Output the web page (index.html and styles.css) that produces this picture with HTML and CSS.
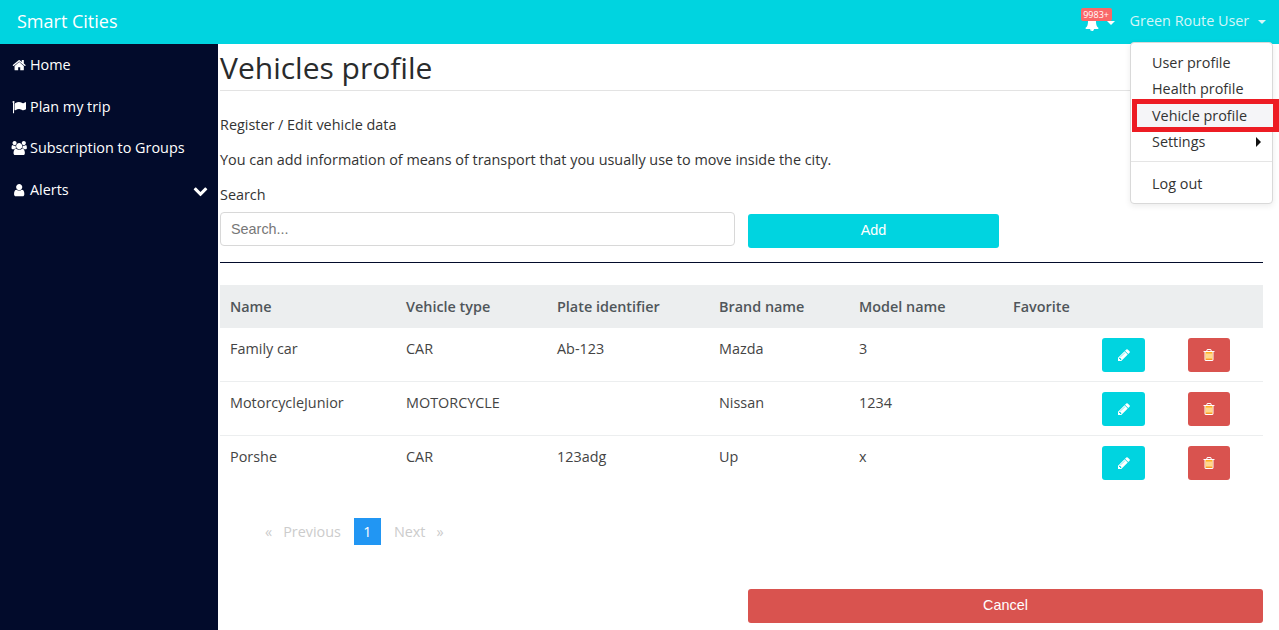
FILE: index.html
```html
<!DOCTYPE html>
<html lang="en">
<head>
<meta charset="utf-8">
<title>Vehicles profile</title>
<link rel="stylesheet" href="styles.css">
</head>
<body>
<svg class="sprite" xmlns="http://www.w3.org/2000/svg">
  <symbol id="i-home" viewBox="0 0 1792 1792"><path d="M1472 992v480q0 26-19 45t-45 19h-384v-384h-256v384h-384q-26 0-45-19t-19-45v-480q0-1 .5-3t.5-3l575-474 575 474q1 2 1 6zm223-69l-62 74q-8 9-21 11h-3q-13 0-21-7l-692-577-692 577q-12 8-24 7-13-2-21-11l-62-74q-8-10-7-23.5t11-20.5l719-599q32-26 76-26t76 26l244 204v-195q0-14 9-23t23-9h192q14 0 23 9t9 23v408l219 182q10 8 11 21.5t-7 23.5z"/></symbol>
  <symbol id="i-flag" viewBox="0 0 1792 1792"><path d="M320 256q0 72-64 110v1266q0 13-9.500 22.500t-22.500 9.500h-64q-13 0-22.500-9.500t-9.500-22.500v-1266q-64-38-64-110 0-53 37.500-90.500t90.500-37.500 90.500 37.500 37.500 90.500zm1472 64v763q0 25-12.500 38.500t-39.500 27.500q-215 116-369 116-61 0-123.500-22t-108.500-48-115.500-48-142.500-22q-192 0-464 146-17 9-33 9-26 0-45-19t-19-45v-742q0-32 31-55 21-14 79-43 236-120 421-120 107 0 200 29t219 88q38 19 88 19 54 0 117.500-21t110-47 88-47 54.500-21q26 0 45 19t19 45z"/></symbol>
  <symbol id="i-users" viewBox="0 0 1920 1792"><path d="M593 896q-162 5-265 128h-134q-82 0-138-40.500t-56-118.500q0-353 124-353 6 0 43.500 21t97.500 42.500 119 21.500q67 0 133-23-5 37-5 66 0 139 81 256zm1071 637q0 120-73 189.500t-194 69.500h-874q-121 0-194-69.500t-73-189.500q0-53 3.500-103.500t14-109 26.500-108.500 43-97.500 62-81 85.500-53.500 111.500-20q10 0 43 21.500t73 48 107 48 135 21.500 135-21.500 107-48 73-48 43-21.500q61 0 111.500 20t85.500 53.500 62 81 43 97.500 26.500 108.500 14 109 3.500 103.500zm-1024-1277q0 106-75 181t-181 75-181-75-75-181 75-181 181-75 181 75 75 181zm704 384q0 159-112.500 271.500t-271.500 112.500-271.500-112.500-112.500-271.500 112.500-271.500 271.500-112.500 271.500 112.500 112.500 271.500zm576 225q0 78-56 118.500t-138 40.500h-134q-103-123-265-128 81-117 81-256 0-29-5-66 66 23 133 23 59 0 119-21.500t97.500-42.500 43.500-21q124 0 124 353zm-128-609q0 106-75 181t-181 75-181-75-75-181 75-181 181-75 181 75 75 181z"/></symbol>
  <symbol id="i-user" viewBox="0 0 1792 1792"><path d="M1536 1399q0 109-62.500 187t-150.500 78h-854q-88 0-150.500-78t-62.500-187q0-85 8.500-160.500t31.500-152 58.500-131 94-89 134.500-34.500q131 128 313 128t313-128q76 0 134.500 34.500t94 89 58.500 131 31.500 152 8.500 160.500zm-256-887q0 159-112.500 271.500t-271.500 112.500-271.500-112.500-112.500-271.500 112.500-271.500 271.500-112.500 271.500 112.500 112.500 271.500z"/></symbol>
  <symbol id="i-chevron" viewBox="0 0 1792 1792"><path d="M1683 808l-742 741q-19 19-45 19t-45-19l-742-741q-19-19-19-45.500t19-45.500l166-165q19-19 45-19t45 19l531 531 531-531q19-19 45-19t45 19l166 165q19 19 19 45.500t-19 45.500z"/></symbol>
  <symbol id="i-bell" viewBox="0 0 1792 1792"><path d="M912 1696q0-16-16-16-59 0-101.500-42.500t-42.500-101.500q0-16-16-16t-16 16q0 73 51.500 124.500t124.500 51.500q16 0 16-16zm816-288q0 52-38 90t-90 38h-448q0 106-75 181t-181 75-181-75-75-181h-448q-52 0-90-38t-38-90q50-42 91-88t85-119.500 74.500-158.500 50-206 19.500-260q0-152 117-282.500t307-158.500q-8-19-8-39 0-40 28-68t68-28 68 28 28 68q0 20-8 39 190 28 307 158.500t117 282.500q0 139 19.500 260t50 206 74.500 158.500 85 119.500 91 88z"/></symbol>
  <symbol id="i-pencil" viewBox="0 0 1792 1792"><path d="M491 1536l91-91-235-235-91 91v107h128v128h107zm523-928q0-22-22-22-10 0-17 7l-542 542q-7 7-7 17 0 22 22 22 10 0 17-7l542-542q7-7 7-17zm-54-192l416 416-832 832h-416v-416zm683 96q0 53-37 90l-166 166-416-416 166-165q36-38 90-38 53 0 91 38l235 234q37 39 37 91z"/></symbol>
  <symbol id="i-trash" viewBox="0 0 1792 1792"><rect x="400" y="500" width="990" height="1000" fill="#ffb020"/><path d="M704 736v576q0 14-9 23t-23 9h-64q-14 0-23-9t-9-23v-576q0-14 9-23t23-9h64q14 0 23 9t9 23zm256 0v576q0 14-9 23t-23 9h-64q-14 0-23-9t-9-23v-576q0-14 9-23t23-9h64q14 0 23 9t9 23zm256 0v576q0 14-9 23t-23 9h-64q-14 0-23-9t-9-23v-576q0-14 9-23t23-9h64q14 0 23 9t9 23zm128 724v-948h-896v948q0 22 7 40.500t14.500 27 10.500 8.500h832q3 0 10.500-8.500t14.500-27 7-40.500zm-672-1076h448l-48-117q-7-9-17-11h-317q-10 2-17 11zm928 32v64q0 14-9 23t-23 9h-96v948q0 83-47 143.500t-113 60.500h-832q-66 0-113-58.500t-47-141.500v-952h-96q-14 0-23-9t-9-23v-64q0-14 9-23t23-9h309l70-167q15-37 54-63t79-26h320q40 0 79 26t54 63l70 167h309q14 0 23 9t9 23z"/></symbol>
</svg>

<header class="navbar">
  <a class="brand">Smart Cities</a>
  <div class="nav-right">
    <a class="nav-bell">
      <svg class="bell-icon"><use href="#i-bell"/></svg>
      <span class="badge">9983+</span>
      <span class="caret"></span>
    </a>
    <a class="nav-user">Green Route User <span class="caret"></span></a>
  </div>
</header>

<div class="shell">
  <nav class="sidebar">
    <a class="side-item"><svg class="side-icon"><use href="#i-home"/></svg>Home</a>
    <a class="side-item"><svg class="side-icon"><use href="#i-flag"/></svg>Plan my trip</a>
    <a class="side-item"><svg class="side-icon side-icon-wide"><use href="#i-users"/></svg>Subscription to Groups</a>
    <a class="side-item"><svg class="side-icon"><use href="#i-user"/></svg>Alerts<svg class="side-chevron"><use href="#i-chevron"/></svg></a>
  </nav>

  <main class="content">
    <h1 class="page-title">Vehicles profile</h1>
    <p class="lead">Register / Edit vehicle data</p>
    <p class="lead-2">You can add information of means of transport that you usually use to move inside the city.</p>
    <label class="search-label" for="search">Search</label>
    <div class="search-row">
      <input id="search" class="search-input" type="text" placeholder="Search...">
      <button class="btn btn-add">Add</button>
    </div>
    <hr class="rule">

    <table class="data">
      <colgroup>
        <col class="c1"><col class="c2"><col class="c3"><col class="c4"><col class="c5"><col class="c6"><col class="c7"><col class="c8">
      </colgroup>
      <thead>
        <tr><th>Name</th><th>Vehicle type</th><th>Plate identifier</th><th>Brand name</th><th>Model name</th><th>Favorite</th><th></th><th></th></tr>
      </thead>
      <tbody>
        <tr>
          <td>Family car</td><td>CAR</td><td>Ab-123</td><td>Mazda</td><td>3</td><td></td>
          <td><button class="icon-btn edit"><svg><use href="#i-pencil"/></svg></button></td>
          <td><button class="icon-btn del"><svg><use href="#i-trash"/></svg></button></td>
        </tr>
        <tr>
          <td>MotorcycleJunior</td><td>MOTORCYCLE</td><td></td><td>Nissan</td><td>1234</td><td></td>
          <td><button class="icon-btn edit"><svg><use href="#i-pencil"/></svg></button></td>
          <td><button class="icon-btn del"><svg><use href="#i-trash"/></svg></button></td>
        </tr>
        <tr>
          <td>Porshe</td><td>CAR</td><td>123adg</td><td>Up</td><td>x</td><td></td>
          <td><button class="icon-btn edit"><svg><use href="#i-pencil"/></svg></button></td>
          <td><button class="icon-btn del"><svg><use href="#i-trash"/></svg></button></td>
        </tr>
      </tbody>
    </table>

    <div class="pager">
      <span class="pg-off pg-arrow">«</span>
      <span class="pg-off">Previous</span>
      <span class="pg-on">1</span>
      <span class="pg-off">Next</span>
      <span class="pg-off pg-arrow">»</span>
    </div>

    <div class="actions">
      <button class="btn btn-cancel">Cancel</button>
    </div>
  </main>
</div>

<div class="menu">
  <a class="menu-item">User profile</a>
  <a class="menu-item">Health profile</a>
  <a class="menu-item menu-active">Vehicle profile</a>
  <a class="menu-item menu-sub">Settings</a>
  <div class="menu-div"></div>
  <a class="menu-item">Log out</a>
</div>
```

FILE: styles.css
```css
* { box-sizing: border-box; }
html, body { height: 100%; }
body {
  margin: 0;
  height: 630px;
  overflow: hidden;
  font-family: "Open Sans", sans-serif;
  font-size: 14.4px;
  line-height: 20px;
  color: #333;
  background: #fff;
}
.sprite { display: none; }

.navbar {
  height: 44px;
  background: #00d4e0;
  display: flex;
  align-items: center;
  justify-content: space-between;
  padding: 0 13px 2px 17px;
}
.brand { font-size: 18px; color: #fff; }
.nav-right { display: flex; align-items: center; gap: 15px; }
.nav-bell { position: relative; display: flex; align-items: center; width: 32px; height: 20px; }
.bell-icon { width: 14px; height: 14px; fill: #fff; margin: 5px 0 0 2px; }
.badge {
  position: absolute;
  left: -2px;
  top: -3px;
  width: 31px;
  height: 13px;
  background: #f96868;
  border-radius: 2px;
  color: #fff;
  font-size: 9px;
  line-height: 13px;
  text-align: center;
}
.caret {
  display: inline-block;
  width: 0;
  height: 0;
  border-top: 4px solid #fff;
  border-left: 4px solid transparent;
  border-right: 4px solid transparent;
  vertical-align: middle;
}
.nav-bell .caret { margin: 3px 0 0 8px; }
.nav-user { color: #d5f6f8; }
.nav-user .caret { border-top-color: #d5f6f8; margin-left: 5px; }

.shell { display: flex; height: 586px; }
.sidebar {
  width: 218px;
  flex: none;
  background: #020b2b;
  padding-top: 0.5px;
}
.side-item {
  position: relative;
  display: flex;
  align-items: center;
  height: 41.5px;
  padding-left: 12px;
  color: #fff;
}
.side-icon { width: 14.4px; height: 14.4px; fill: #fff; margin-right: 3.6px; flex: none; }
.side-icon-wide { width: 16.4px; margin-left: -1px; margin-right: 2.6px; }
.side-chevron { position: absolute; right: 10px; top: 14px; width: 15px; height: 15px; fill: #fff; }

.content { flex: 1; min-width: 0; padding: 0 16px 0 2px; }
.page-title {
  margin: 0;
  height: 47px;
  font-size: 30px;
  font-weight: 400;
  line-height: 48px;
  color: #292b2c;
  border-bottom: 1px solid #e3e3e3;
}
.lead { margin: 24px 0 0; }
.lead-2 { margin: 15px 0 0; }
.search-label { display: block; margin-top: 15px; }
.search-row { display: flex; align-items: flex-start; gap: 13px; margin-top: 7px; }
.search-input {
  width: 515px;
  height: 34px;
  border: 1px solid #d8d8d8;
  border-radius: 4px;
  padding: 0 10px;
  font-family: "Liberation Sans", sans-serif;
  font-size: 14.4px;
  color: #555;
}
.search-input::placeholder { color: #777; opacity: 1; }
.btn {
  height: 34px;
  padding: 0 0 2px;
  border: 0;
  border-radius: 3px;
  color: #fff;
  font-family: "Liberation Sans", sans-serif;
  font-size: 14.4px;
}
.btn-add { width: 251px; margin-top: 2px; background: #00d4e0; }
.rule { height: 1px; margin: 14px 0 0; border: 0; background: #020b2b; }

.data { width: 100%; margin-top: 22px; border-collapse: separate; border-spacing: 0; table-layout: fixed; }
.c1 { width: 176px; } .c2 { width: 151px; } .c3 { width: 162px; } .c4 { width: 140px; }
.c5 { width: 154px; } .c6 { width: 89px; } .c7 { width: 86px; } .c8 { width: 85px; }
.data th {
  height: 43px;
  padding: 1px 10px 0;
  background: #eceeef;
  font-weight: 600;
  text-align: left;
  color: #50565a;
}
.data td {
  height: 54px;
  padding: 11px 10px 0;
  vertical-align: top;
  border-bottom: 1px solid #eceeef;
  color: #444;
}
.data td:nth-child(n+7) { padding-top: 10px; }
.data tbody tr:last-child td { border-bottom: 0; }
.icon-btn {
  display: flex;
  align-items: center;
  justify-content: center;
  height: 34px;
  padding: 0;
  border: 0;
  border-radius: 3px;
}
.icon-btn svg { width: 14px; height: 14px; fill: #fff; }
.edit { width: 43px; background: #00d4e0; }
.del { width: 42px; background: #d9534f; }

.pager { display: flex; align-items: center; height: 27px; margin: 28px 0 0 45px; color: #ccc; }
.pg-off { color: #ccc; margin-right: 13px; }
.pg-arrow { margin-right: 11px; }
.pg-on + .pg-off { margin-right: 11px; }
.pg-on {
  width: 27px;
  height: 27px;
  margin-right: 13px;
  background: #2196f3;
  color: #fff;
  text-align: center;
  line-height: 28px;
}

.actions { display: flex; justify-content: flex-end; margin-top: 44px; }
.btn-cancel { width: 515px; background: #d9534f; }

.menu {
  position: absolute;
  left: 1130px;
  top: 42px;
  width: 143px;
  height: 162px;
  padding-top: 7px;
  background: #fff;
  border: 1px solid #d9d9d9;
  border-radius: 4px;
  box-shadow: 0 2px 6px rgba(0,0,0,.08);
}
.menu-item {
  position: relative;
  display: block;
  height: 26px;
  padding-left: 21px;
  line-height: 26px;
  color: #333;
  white-space: nowrap;
}
.menu-active {
  width: 147px;
  height: 33px;
  margin: -3px 0 -3px 1px;
  padding-left: 15px;
  line-height: 24px;
  background: #f5f5f8;
  border: 5px solid #ed1c24;
  border-right-width: 6px;
}
.menu-sub::after {
  content: "";
  position: absolute;
  right: 11px;
  top: 8px;
  border-left: 5px solid #111;
  border-top: 5px solid transparent;
  border-bottom: 5px solid transparent;
}
.menu-div { height: 1px; margin: 6px 0 9px; background: #e5e5e5; }
```
